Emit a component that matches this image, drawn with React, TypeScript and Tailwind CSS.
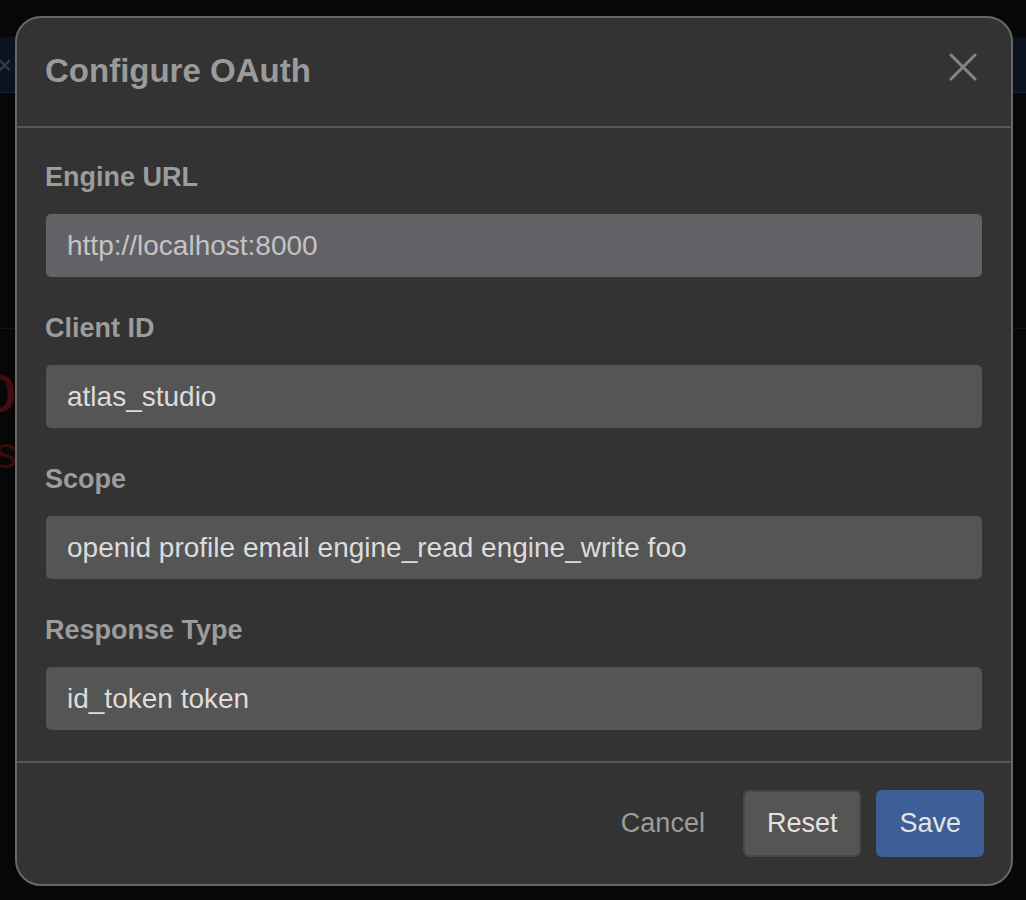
import React from 'react';

type Field = {
  label: string;
  value: string;
  focused?: boolean;
};

const fields: Field[] = [
  { label: 'Engine URL', value: 'http://localhost:8000', focused: true },
  { label: 'Client ID', value: 'atlas_studio' },
  { label: 'Scope', value: 'openid profile email engine_read engine_write foo' },
  { label: 'Response Type', value: 'id_token token' },
];

const font = { fontFamily: '"Liberation Sans", Arial, Helvetica, sans-serif' };

// Dimmed page that sits behind the dialog
const Backdrop: React.FC = () => (
  <div className="w-full h-[900px] bg-[#070707] overflow-hidden" style={font}>
    <div className="h-[37px]" />
    <div className="h-[56px] bg-[#0b1320] flex items-center border-b border-[#17223a]">
      <span className="-ml-[3px] text-[26px] leading-none text-[#3a3f48]">×</span>
    </div>
    <div className="h-[236px] border-b border-[#141414]" />
    <div className="h-[24px]" />
    <div className="-ml-[22px] text-[70px] leading-[70px] text-[#440d0d]">o</div>
    <div className="-ml-[30px] mt-[8px] text-[44px] leading-[44px] text-[#3a0b0b]">es</div>
  </div>
);

const OAuthDialog: React.FC = () => (
  <div
    className="absolute left-[15px] top-[16px] w-[998px] h-[870px] bg-[#333333] border-2 border-[#676767] rounded-[26px] flex flex-col"
    style={font}
  >
    {/* Header */}
    <div className="h-[110px] shrink-0 flex items-center justify-between pl-[28px] pr-[34px] border-b-2 border-[#575757]">
      <h2 className="text-[33px] font-bold text-[#9a9a9a] leading-none -mt-[3px]">Configure OAuth</h2>
      <svg width="28" height="28" viewBox="0 0 28 28" className="-mt-[11px]">
        <path d="M2 2 L26 26 M26 2 L2 26" stroke="#858585" strokeWidth="3" strokeLinecap="round" />
      </svg>
    </div>

    {/* Body */}
    <div className="flex-1 px-[29px] pt-[33px] flex flex-col">
      {fields.map((f, i) => (
        <div key={f.label} className={i > 0 ? 'mt-[35px]' : ''}>
          <div className="text-[27px] font-bold leading-[32px] text-[#9c9c9c] -ml-[1px]">{f.label}</div>
          <div
            className={`mt-[21px] h-[63px] rounded-[5px] flex items-center pl-[21px] text-[28px] ${
              f.focused ? 'bg-[#626266] text-[#c4c4c4]' : 'bg-[#555555] text-[#dcdcdc]'
            }`}
          >
            {f.value}
          </div>
        </div>
      ))}
    </div>

    {/* Footer */}
    <div className="h-[123px] shrink-0 border-t-2 border-[#575757] flex items-center justify-end gap-[15px] pr-[27px]">
      <button className="h-[67px] px-[23px] text-[27px] text-[#9c9c9c] rounded-[6px]">Cancel</button>
      <button className="h-[67px] px-[22px] text-[27px] text-[#e2e2e2] bg-[#555555] border-2 border-[#474747] rounded-[6px]">
        Reset
      </button>
      <button className="h-[67px] px-[23px] text-[27px] text-[#e4e4e4] bg-[#3d5e96] rounded-[6px]">Save</button>
    </div>
  </div>
);

export default function App() {
  return (
    <div className="relative w-[1026px] h-[900px] overflow-hidden">
      <Backdrop />
      <OAuthDialog />
    </div>
  );
}
